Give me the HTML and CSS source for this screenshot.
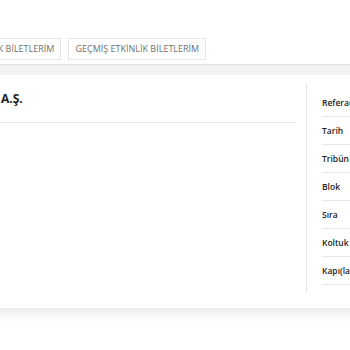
FILE: index.html
```html
<!DOCTYPE html>
<html lang="tr">
<head>
  <meta charset="UTF-8" />
  <meta name="viewport" content="width=device-width, initial-scale=1" />
  <title>Biletlerim</title>
  <link rel="stylesheet" href="styles.css">
</head>
<body>

  <div class="sayfa">
    <div class="sekmeler">
      <a href="#" class="sekme">GELECEK ETKİNLİK BİLETLERİM</a>
      <a href="#" class="sekme">GEÇMİŞ ETKİNLİK BİLETLERİM</a>
    </div>

    <div class="bant"></div>

    <div class="kart">
      <div class="bilet-sol">
        <h2 class="firma">A.Ş.</h2>
      </div>
      <div class="ayrac"></div>
      <ul class="bilet-detay">
        <li>Referans No</li>
        <li>Tarih</li>
        <li>Tribün</li>
        <li>Blok</li>
        <li>Sıra</li>
        <li>Koltuk</li>
        <li>Kapı(lar)</li>
      </ul>
    </div>

    <div class="golge"></div>
  </div>

</body>
</html>
```

FILE: styles.css
```css
:root {
  --cizgi: #e6e6e6;
  --yazi: #222222;
  --gri-yazi: #707070;
  --bant: #f3f3f3;
}

* {
  margin: 0;
  padding: 0;
  box-sizing: border-box;
}

html, body {
  overflow: hidden;
}

body {
  font-family: 'Open Sans', 'Liberation Sans', sans-serif;
  background: #ffffff;
  color: var(--yazi);
  -webkit-font-smoothing: antialiased;
}

.sayfa {
  width: 350px;
  height: 350px;
  overflow: hidden;
}

/* Sekmeler */
.sekmeler {
  display: flex;
  gap: 7px;
  padding-top: 38px;
  margin-left: -81px;
}

.sekme {
  display: block;
  height: 22px;
  line-height: 20px;
  padding: 0 6px;
  border: 1px solid var(--cizgi);
  font-size: 9px;
  color: var(--gri-yazi);
  text-decoration: none;
  white-space: nowrap;
}

.bant {
  margin-top: 4px;
  height: 11px;
  border-top: 1px solid #e2e2e2;
  background: var(--bant);
}

/* Kart */
.kart {
  display: flex;
  height: 233px;
  padding-top: 8px;
  background: #ffffff;
}

.bilet-sol {
  width: 296px;
  flex-shrink: 0;
  margin-right: 10px;
}

.firma {
  height: 40px;
  padding-top: 8px;
  padding-left: 1px;
  font-size: 12px;
  font-weight: 700;
  line-height: 16px;
  border-bottom: 1px solid var(--cizgi);
}

.ayrac {
  width: 1px;
  height: 210px;
  flex-shrink: 0;
  background: var(--cizgi);
}

.bilet-detay {
  list-style: none;
  width: 120px;
  flex-shrink: 0;
  margin-left: 15px;
  padding-top: 6px;
}

.bilet-detay li {
  height: 28px;
  line-height: 27px;
  font-size: 8.5px;
  font-weight: 600;
  white-space: nowrap;
  border-bottom: 1px solid var(--cizgi);
}

.golge {
  height: 14px;
  background: linear-gradient(#ececec, #ffffff);
}
```
